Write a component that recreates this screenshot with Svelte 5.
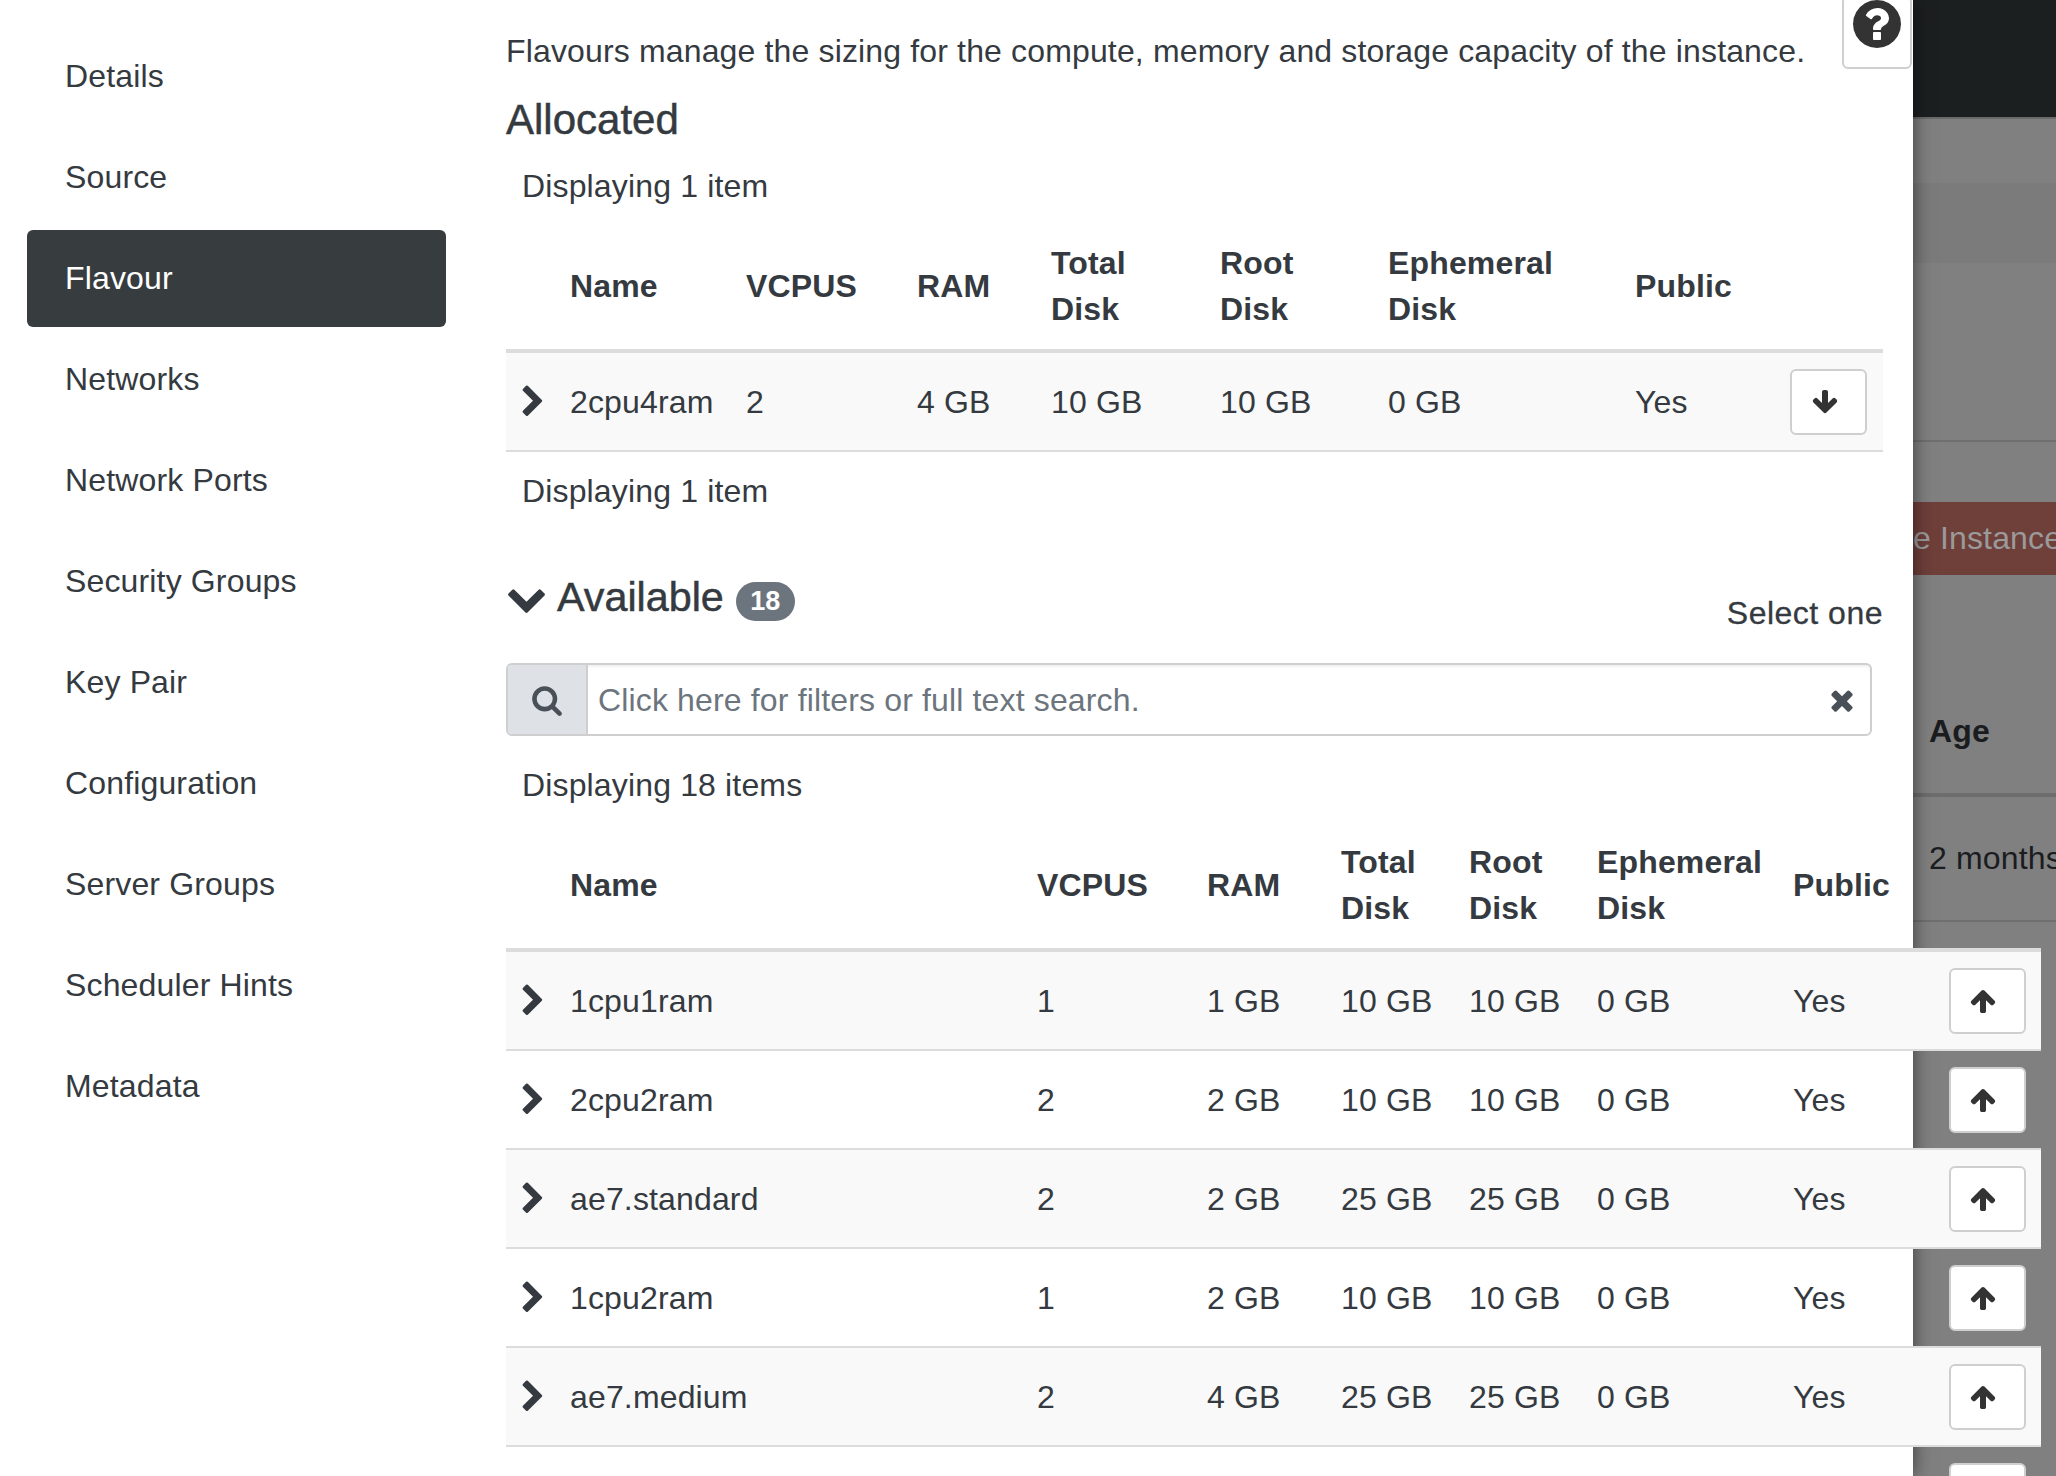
<script>
  const navItems = ['Details', 'Source', 'Flavour', 'Networks', 'Network Ports', 'Security Groups', 'Key Pair', 'Configuration', 'Server Groups', 'Scheduler Hints', 'Metadata'];
  const columns = ['Name', 'VCPUS', 'RAM', 'Total Disk', 'Root Disk', 'Ephemeral Disk', 'Public'];

  const allocatedWidths = [48, 176, 171, 134, 169, 168, 247, 155, 109];
  const availableWidths = [48, 467, 170, 134, 128, 128, 196, 156, 108];

  const allocated = [['2cpu4ram', '2', '4 GB', '10 GB', '10 GB', '0 GB', 'Yes']];
  const available = [
    ['1cpu1ram', '1', '1 GB', '10 GB', '10 GB', '0 GB', 'Yes'],
    ['2cpu2ram', '2', '2 GB', '10 GB', '10 GB', '0 GB', 'Yes'],
    ['ae7.standard', '2', '2 GB', '25 GB', '25 GB', '0 GB', 'Yes'],
    ['1cpu2ram', '1', '2 GB', '10 GB', '10 GB', '0 GB', 'Yes'],
    ['ae7.medium', '2', '4 GB', '25 GB', '25 GB', '0 GB', 'Yes'],
    // next row runs off the bottom, only its button shows
    ['', '', '', '', '', '', '']
  ];

  // Font Awesome 4 glyphs on their 1792 grid
  const icons = {
    right: 'M1363 877l-742 742q-19 19-45 19t-45-19l-166-166q-19-19-19-45t19-45l531-531-531-531q-19-19-19-45t19-45l166-166q19-19 45-19t45 19l742 742q19 19 19 45t-19 45z',
    down: 'M1683 808l-742 741q-19 19-45 19t-45-19l-742-741q-19-19-19-45.5t19-45.5l166-165q19-19 45-19t45 19l531 531 531-531q19-19 45-19t45 19l166 165q19 19 19 45.5t-19 45.5z',
    arrowUp: 'M1675 971q0 51-37 90l-75 75q-38 38-91 38-54 0-90-38l-294-293v704q0 52-37.5 84.5t-90.5 32.5h-128q-53 0-90.5-32.5t-37.5-84.5v-704l-294 293q-36 38-90 38t-90-38l-75-75q-38-38-38-90 0-53 38-91l651-651q35-37 90-37 54 0 91 37l651 651q37 39 37 91z',
    arrowDown: 'M1675 832q0 53-37 90l-651 652q-39 37-91 37-53 0-90-37l-651-652q-38-36-38-90 0-53 38-91l74-75q39-37 91-37 53 0 90 37l294 294v-704q0-52 38-90t90-38h128q52 0 90 38t38 90v704l294-294q37-37 90-37 52 0 91 37l75 75q37 39 37 91z',
    search: 'M1216 832q0-185-131.5-316.5t-316.5-131.5-316.5 131.5-131.5 316.5 131.5 316.5 316.5 131.5 316.5-131.5 131.5-316.5zm512 832q0 52-38 90t-90 38q-54 0-90-38l-343-342q-179 124-399 124-143 0-273.5-55.5t-225-150-150-225-55.5-273.5 55.5-273.5 150-225 225-150 273.5-55.5 273.5 55.5 225 150 150 225 55.5 273.5q0 220-124 399l343 343q37 37 37 90z',
    times: 'M1490 1322q0 40-28 68l-136 136q-28 28-68 28t-68-28l-294-294-294 294q-28 28-68 28t-68-28l-136-136q-28-28-28-68t28-68l294-294-294-294q-28-28-28-68t28-68l136-136q28-28 68-28t68 28l294 294 294-294q28-28 68-28t68 28l136 136q28 28 28 68t-28 68l-294 294 294 294q28 28 28 68z',
    help: 'M1024 1376v-192q0-14-9-23t-23-9h-192q-14 0-23 9t-9 23v192q0 14 9 23t23 9h192q14 0 23-9t9-23zm256-672q0-88-55.5-163t-138.5-116-170-41q-243 0-371 213-15 24 8 42l132 100q7 6 19 6 16 0 25-12 53-68 86-92 34-24 86-24 48 0 85.5 26t37.5 59q0 38-20 61t-68 45q-63 28-115.5 86.5t-52.5 125.5v36q0 14 9 23t23 9h192q14 0 23-9t9-23q0-19 21.5-49.5t54.5-49.5q32-18 49-28.5t46-35 44.5-48 28-60.5 12.5-81zm384 192q0 209-103 385.5t-279.5 279.5-385.5 103-385.5-103-279.5-279.5-103-385.5 103-385.5 279.5-279.5 385.5-103 385.5 103 279.5 279.5 103 385.5z'
  };
</script>

{#snippet icon(name, cls)}
  <svg class={cls} viewBox="0 0 1792 1792" aria-hidden="true"><path d={icons[name]} /></svg>
{/snippet}

{#snippet flavourTable(rows, widths, arrow)}
  <table class={arrow}>
    <colgroup>
      {#each widths as w}
        <col style="width: {w}px" />
      {/each}
    </colgroup>
    <thead>
      <tr>
        <th></th>
        {#each columns as col}
          <th>{col}</th>
        {/each}
        <th></th>
      </tr>
    </thead>
    <tbody>
      {#each rows as row}
        <tr>
          <td class="toggle">{@render icon('right', 'chevron')}</td>
          {#each row as cell}
            <td>{cell}</td>
          {/each}
          <td><button class="move">{@render icon(arrow, 'arrow')}</button></td>
        </tr>
      {/each}
    </tbody>
  </table>
{/snippet}

<div class="screen">
  <div class="modal">
    <nav class="steps">
      {#each navItems as item}
        <div class="step" class:active={item === 'Flavour'}>{item}</div>
      {/each}
    </nav>

    <main class="content">
      <p class="intro">Flavours manage the sizing for the compute, memory and storage capacity of the instance.</p>
      <h2 class="allocated">Allocated</h2>
      <div class="count before-table">Displaying 1 item</div>
      {@render flavourTable(allocated, allocatedWidths, 'arrowDown')}
      <div class="count">Displaying 1 item</div>

      <div class="available-head">
        {@render icon('down', 'collapse')}
        <h2>Available</h2>
        <span class="badge">18</span>
        <span class="select-one">Select one</span>
      </div>

      <div class="search">
        <span class="addon">{@render icon('search', 'search-icon')}</span>
        <span class="placeholder">Click here for filters or full text search.</span>
        {@render icon('times', 'clear-icon')}
      </div>

      <div class="count second before-table">Displaying 18 items</div>
      {@render flavourTable(available, availableWidths, 'arrowUp')}
    </main>

    <button class="help">{@render icon('help', 'help-icon')}</button>
  </div>

  <div class="page">
    <div class="topbar"></div>
    <div class="band one"></div>
    <div class="band two"></div>
    <div class="band three"></div>
    <div class="band four"><span class="danger">e Instance</span></div>
    <div class="band head"><b>Age</b></div>
    <div class="band age">2 months</div>
    <div class="band rest"></div>
  </div>
</div>

<style>
  :global(body) {
    margin: 0;
    background: #808080;
  }

  .screen {
    display: flex;
    height: 1476px;
    overflow: hidden;
    font-family: "Liberation Sans", Arial, sans-serif;
    font-size: 32px;
    letter-spacing: 0.15px;
    line-height: 46.5px;
    color: #343a40;
  }

  .modal {
    position: relative;
    z-index: 1;
    display: flex;
    flex: none;
    width: 1913px;
    background: #fff;
    box-shadow: 0 0 18px rgba(0, 0, 0, 0.55);
  }

  .steps {
    flex: none;
    box-sizing: border-box;
    width: 506px;
    padding: 28px 60px 0 27px;
    display: flex;
    flex-direction: column;
    gap: 4px;
  }

  .step {
    display: flex;
    align-items: center;
    box-sizing: border-box;
    height: 97px;
    padding-left: 38px;
    border-radius: 6px;
  }

  .step.active {
    background: #373d3f;
    color: #fff;
  }

  .content {
    flex: none;
    width: 1407px;
    padding-top: 28px;
  }

  .intro {
    margin: 0;
    white-space: nowrap;
  }

  h2 {
    margin: 0;
    font-size: 41.3px;
    font-weight: normal;
    letter-spacing: 0;
    line-height: 49px;
    -webkit-text-stroke: 0.5px #343a40;
  }

  .allocated {
    margin-top: 20px;
    margin-bottom: 3.5px;
    font-size: 42px;
  }

  .count {
    padding: 16px;
  }

  .before-table {
    padding-bottom: 14px;
  }

  table {
    table-layout: fixed;
    border-collapse: separate;
    border-spacing: 0;
    width: min-content;
  }

  th {
    padding: 16px 16px;
    text-align: left;
    font-weight: bold;
    border-bottom: 4px solid #dcdcdc;
  }

  td {
    height: 97px;
    padding: 2px 16px 0;
    box-sizing: border-box;
    border-bottom: 2px solid #dcdcdc;
    white-space: nowrap;
  }

  tbody tr {
    height: 99px;
  }

  tbody tr:nth-child(odd) td {
    background: #f9f9f9;
  }

  td.toggle {
    padding: 2px 0 0 10px;
  }

  .chevron {
    display: block;
    width: 34px;
    height: 34px;
    fill: #343a40;
  }

  .move {
    display: flex;
    align-items: center;
    justify-content: center;
    box-sizing: border-box;
    width: 77px;
    height: 66px;
    padding: 0 8px 0 0;
    background: #fff;
    border: 2px solid #cfcfcf;
    border-radius: 6px;
  }

  table.arrowUp .move {
    padding-right: 9px;
  }

  .arrow {
    width: 28px;
    height: 28px;
    fill: #333;
  }

  .available-head {
    display: flex;
    align-items: flex-start;
    width: 1377px;
    padding-top: 43px;
    margin-bottom: 26.5px;
  }

  .collapse {
    flex: none;
    width: 41px;
    height: 41px;
    margin: 4px 10px 0 0;
    fill: #343a40;
  }

  .badge {
    margin: 9px 0 0 12px;
    width: 59px;
    height: 39px;
    border-radius: 20px;
    background: #6c757d;
    color: #fff;
    font-size: 27px;
    font-weight: bold;
    line-height: 39px;
    text-align: center;
  }

  .select-one {
    margin: 17px 0 0 auto;
    letter-spacing: 0.5px;
    -webkit-text-stroke: 0.3px #343a40;
  }

  .search {
    display: flex;
    align-items: center;
    box-sizing: border-box;
    width: 1366px;
    height: 73px;
    border: 2px solid #cfcfcf;
    border-radius: 6px;
    box-shadow: inset 0 2px 2px rgba(0, 0, 0, 0.06);
  }

  .addon {
    display: flex;
    align-items: center;
    justify-content: center;
    box-sizing: border-box;
    width: 80px;
    height: 100%;
    background: #dee1e5;
    border-right: 2px solid #cfcfcf;
    border-radius: 4px 0 0 4px;
  }

  .search-icon {
    width: 32px;
    height: 32px;
    fill: #495057;
  }

  .placeholder {
    flex: 1;
    padding: 1px 0 0 10px;
    color: #6c757d;
  }

  .clear-icon {
    width: 32px;
    height: 32px;
    margin-right: 12px;
    fill: #495057;
  }

  .count.second {
    margin-top: 10px;
  }

  .help {
    position: absolute;
    top: -4px;
    right: 1px;
    box-sizing: border-box;
    width: 70px;
    height: 73px;
    padding: 0;
    display: flex;
    justify-content: center;
    align-items: flex-start;
    background: #fff;
    border: 2px solid #cfcfcf;
    border-radius: 6px;
  }

  .help-icon {
    width: 56px;
    height: 56px;
    margin-top: -2px;
    fill: #333;
  }

  .page {
    flex: 1;
    display: flex;
    flex-direction: column;
    min-width: 0;
    overflow: hidden;
    white-space: nowrap;
    color: #1a1c1f;
  }

  .topbar {
    flex: none;
    height: 117px;
    background: #1c1f20;
    border-bottom: 2px solid #6a6a6a;
  }

  .band {
    flex: none;
    background: #808080;
  }

  .one { height: 64px; }
  .two { height: 80px; background: #7b7b7b; }
  .three { height: 177px; border-bottom: 2px solid #6f6f6f; }

  .four {
    height: 133px;
    padding-top: 60px;
    box-sizing: border-box;
  }

  .danger {
    display: block;
    height: 73px;
    background: #6f3f3a;
    color: #9a9a9a;
    line-height: 73px;
  }

  .head {
    box-sizing: border-box;
    height: 222px;
    padding: 133px 0 0 16px;
    border-bottom: 4px solid #6d6d6d;
  }

  .age {
    box-sizing: border-box;
    height: 125px;
    padding: 38px 0 0 16px;
    border-bottom: 2px solid #6f6f6f;
  }

  .rest {
    flex: 1;
  }
</style>
